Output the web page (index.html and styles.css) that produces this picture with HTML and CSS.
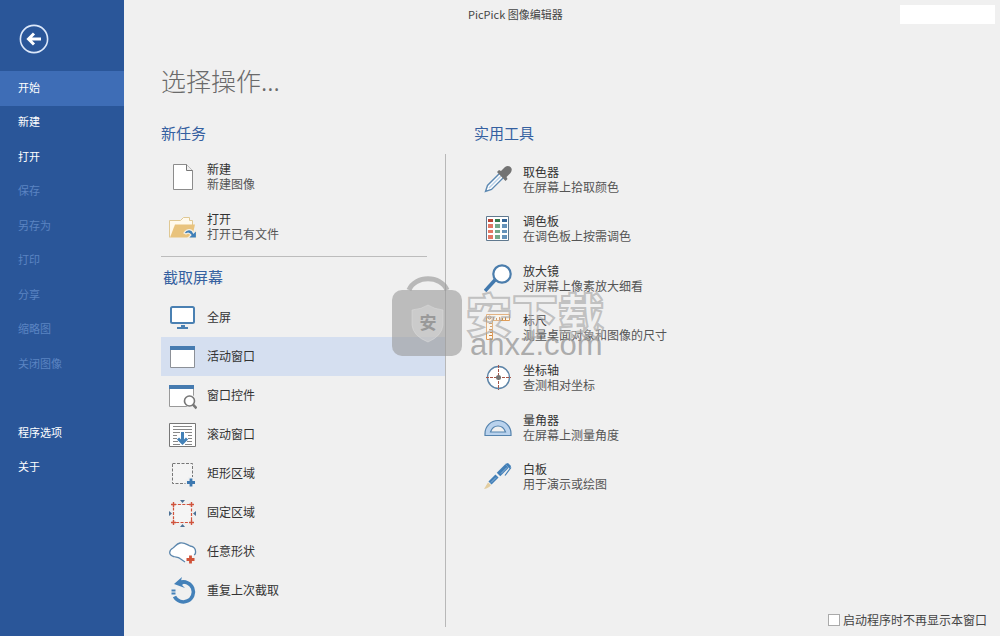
FILE: index.html
```html
<!DOCTYPE html>
<html lang="zh-CN">
<head>
<meta charset="utf-8">
<meta name="viewport" content="width=device-width, initial-scale=1">
<title>PicPick 图像编辑器</title>
<link rel="stylesheet" href="styles.css">
</head>
<body>
<div class="app">
  <aside class="sidebar">
    <button class="back" aria-label="返回">
      <svg viewBox="0 0 30 30" fill="none"><circle cx="15" cy="15" r="13.6" stroke="#dce8fa" stroke-width="1.6"/><path d="M22 15H9.500M15 9.500L9.500 15l5.500 5.500" stroke="#fff" stroke-width="3"/></svg>
    </button>
    <nav class="menu">
      <button class="menu-item active">开始</button>
      <button class="menu-item">新建</button>
      <button class="menu-item">打开</button>
      <button class="menu-item" disabled>保存</button>
      <button class="menu-item" disabled>另存为</button>
      <button class="menu-item" disabled>打印</button>
      <button class="menu-item" disabled>分享</button>
      <button class="menu-item" disabled>缩略图</button>
      <button class="menu-item" disabled>关闭图像</button>
      <span class="menu-space"></span>
      <button class="menu-item">程序选项</button>
      <button class="menu-item">关于</button>
    </nav>
  </aside>

  <main class="main">
    <header class="titlebar">
      <span class="title">PicPick 图像编辑器</span>
      <span class="blank"></span>
    </header>
    <h1 class="heading">选择操作...</h1>
    <div class="columns">
      <section class="column">
        <h2 class="section">新任务</h2>
        <div class="left-body">
          <div class="tasks">
            <button class="item">
              <svg class="icon" viewBox="0 0 28 28"><path d="M4.500 1.500h13l6 6v19h-19z" fill="#fff" stroke="#8c8c8c"/><path d="M17.500 1.500v6h6" fill="#eee" stroke="#777"/></svg>
              <span class="label"><span class="name">新建</span><span class="desc">新建图像</span></span>
            </button>
            <button class="item">
              <svg class="icon" viewBox="0 0 28 28"><path d="M.500 24.500V7.500h11l3-3h6v3h3v5" fill="#fff9ec" stroke="#dfc894"/><path d="M1 24.500L6 11.500h20l-3 13z" fill="#e9c37d"/><path d="M15 20c3-5 8-4 9.500 0l3-3v8H19l3-3q-2-3-5-1z" fill="#3f7fb8" stroke="#f6efe0" stroke-width="1.200"/></svg>
              <span class="label"><span class="name">打开</span><span class="desc">打开已有文件</span></span>
            </button>
          </div>
          <h2 class="section capture-title">截取屏幕</h2>
          <div class="captures">
            <button class="item">
              <svg class="icon" viewBox="0 0 28 28"><rect x="2" y="3" width="23" height="16" rx="1.500" fill="#fff" stroke="#4a80b2" stroke-width="2"/><path d="M12 21h4v2h3v2H8v-2h4z" fill="#4a80b2"/></svg>
              <span class="label">全屏</span>
            </button>
            <button class="item selected">
              <svg class="icon" viewBox="0 0 28 28"><path d="M1.500 3.500h24v21h-24z" fill="#fff" stroke="#8c9097"/><path d="M1 3h25v4H1z" fill="#467bb0"/></svg>
              <span class="label">活动窗口</span>
            </button>
            <button class="item">
              <svg class="icon" viewBox="0 0 28 28"><path d="M.500 3.500h24v21H.500z" fill="#fff" stroke="#999"/><path d="M0 3h25v4H0z" fill="#467bb0"/><path d="M14 20l5-7 8 1v9l-7 4z" fill="#f0f0f0"/><circle cx="20.500" cy="19" r="5" fill="#fff" stroke="#777" stroke-width="1.600"/><path d="M24 22.500l3.500 4" stroke="#777" stroke-width="2.600"/></svg>
              <span class="label">窗口控件</span>
            </button>
            <button class="item">
              <svg class="icon" viewBox="0 0 28 28"><path d="M.500 2.500h26v23H.500z" fill="#fff" stroke="#777"/><path d="M4 5.500h19M4 8.500h19M4 11.500h7M16 11.500h7M4 14.500h4M19 14.500h4M4 17.500h4M19 17.500h4M4 20.500h5M18 20.500h5M4 23.500h7M16 23.500h7" stroke="#888"/><path d="M13.500 11v11M9 17.500l4.500 4.500 4.500-4.500" fill="none" stroke="#4381b7" stroke-width="3"/></svg>
              <span class="label">滚动窗口</span>
            </button>
            <button class="item">
              <svg class="icon" viewBox="0 0 28 28"><path d="M3.500 3.500h20v20h-20z" fill="#f4f4f4" stroke="#777" stroke-dasharray="3 1.500"/><path d="M22 17v11M16.500 22.500h11" stroke="#f0f0f0" stroke-width="6"/><path d="M22 18.500v8M18 22.500h8" stroke="#3d78b0" stroke-width="2.800"/></svg>
              <span class="label">矩形区域</span>
            </button>
            <button class="item">
              <svg class="icon" viewBox="0 0 28 28"><path d="M4.500 5.500h18v18h-18z" fill="#f5f5f5" stroke="#d0533c" stroke-width="1.200" stroke-dasharray="3 1.400"/><path d="M2 5.500h5M4.500 3v5M20 5.500h5M22.500 3v5M2 23.500h5M4.500 21v5M20 23.500h5M22.500 21v5" stroke="#d0533c" stroke-width="1.400"/><path d="M11 1h5l-2.500 3zM11 28h5l-2.500-3zM0 12v5l3-2.500zM27 12v5l-3-2.500z" fill="#4c7196"/></svg>
              <span class="label">固定区域</span>
            </button>
            <button class="item">
              <svg class="icon" viewBox="0 0 28 28"><path d="M15 24.500l-4-4c-2-2-4-1-6.500-2C-1 17 0 12 4 10c3-2 3-4 7-5 5-1 7 2 10 3 4 .500 6 3 5.500 7-.500 3-2.500 2-5.500 5z" fill="#fff"/><path d="M16 24l-5-3.500c-2-2-4-1-6.500-2C-1 17 0 12 4 10c3-2 3-4 7-5 5-1 7 2 10 3 4 .500 6 3 5.500 7q-.300 1.500-1.500 2" fill="none" stroke="#5c87ad" stroke-width="1.300"/><path d="M21.500 17.500v8M17.500 21.500h8" stroke="#d05238" stroke-width="2.800"/></svg>
              <span class="label">任意形状</span>
            </button>
            <button class="item">
              <svg class="icon" viewBox="0 0 28 28" fill="none"><path d="M11 5.500a10 10 0 1 1-5.500 14" stroke="#4481b9" stroke-width="3.600"/><path d="M2.500 13.500h4M2.500 16.500h4" stroke="#4481b9" stroke-width="1.800"/><path d="M5 7l8-7-1 3.500 6 .500-5 4 3 3z" fill="#4481b9"/></svg>
              <span class="label">重复上次截取</span>
            </button>
          </div>
        </div>
      </section>

      <section class="column right">
        <h2 class="section">实用工具</h2>
        <div class="tools">
          <button class="item">
            <svg class="icon" viewBox="0 0 28 28"><path d="M1.500 26.500l2-6L16 8l4 4L7.500 24.500z" fill="#fff" stroke="#5d89b2" stroke-width="1.400"/><path d="M5 23L17 11" stroke="#b7d0e8" stroke-width="1.500"/><path d="M13 7l2-2 2 1 4-4q3-2 5.500 0t0 6l-4 4 1 2-2 2z" fill="#737373"/></svg>
            <span class="label"><span class="name">取色器</span><span class="desc">在屏幕上拾取颜色</span></span>
          </button>
          <button class="item">
            <svg class="icon" viewBox="0 0 28 28"><path d="M2.500 2.500h22v24h-22z" fill="#fff" stroke="#60798f"/><path d="M4 5h5v3H4z" fill="#b84232"/><path d="M4 10h5v4H4zM4 16h5v3H4zM4 21h5v4H4z" fill="#e27764"/><path d="M11 5h5v3h-5z" fill="#377a4e"/><path d="M11 10h5v4h-5zM11 16h5v3h-5zM11 21h5v4h-5z" fill="#73a98a"/><path d="M18 5h5v3h-5z" fill="#326395"/><path d="M18 10h5v4h-5zM18 16h5v3h-5zM18 21h5v4h-5z" fill="#6592b9"/></svg>
            <span class="label"><span class="name">调色板</span><span class="desc">在调色板上按需调色</span></span>
          </button>
          <button class="item">
            <svg class="icon" viewBox="0 0 28 28"><path d="M1 27l10-11" stroke="#4279ae" stroke-width="3.600"/><circle cx="18" cy="10" r="8.700" fill="#fff" stroke="#4b7dac" stroke-width="2.200"/></svg>
            <span class="label"><span class="name">放大镜</span><span class="desc">对屏幕上像素放大细看</span></span>
          </button>
          <button class="item">
            <svg class="icon" viewBox="0 0 28 28"><path d="M2.500 1.500h23v6h-17v19h-6z" fill="#fff8ed" stroke="#df9c57"/><path d="M9.500 7V4M12.500 7V5M15.500 7V4M18.500 7V5M21.500 7V4M8 10.500H5M8 13.500H6M8 16.500H5M8 19.500H6M8 22.500H5" stroke="#c9823f"/><circle cx="5.500" cy="4.500" r="1.500" fill="#fff" stroke="#b9865b"/></svg>
            <span class="label"><span class="name">标尺</span><span class="desc">测量桌面对象和图像的尺寸</span></span>
          </button>
          <button class="item">
            <svg class="icon" viewBox="0 0 28 28"><circle cx="14.500" cy="14.500" r="11" fill="#fff" stroke="#5e85a8" stroke-width="1.400"/><path d="M14.500 2v25M2 14.500h25" stroke="#a65547" stroke-dasharray="3 1"/><circle cx="14.500" cy="14.500" r="2.500" fill="#737373"/></svg>
            <span class="label"><span class="name">坐标轴</span><span class="desc">查测相对坐标</span></span>
          </button>
          <button class="item">
            <svg class="icon" viewBox="0 0 28 28"><path d="M1 22.500v-2a13 13 0 0 1 26 0v2zM6.500 19h15q-2-6-7.500-6t-7.500 6z" fill="#b9d2ed" fill-rule="evenodd" stroke="#5583ad" stroke-width="1.200"/></svg>
            <span class="label"><span class="name">量角器</span><span class="desc">在屏幕上测量角度</span></span>
          </button>
          <button class="item">
            <svg class="icon" viewBox="0 0 28 28" fill="none"><path d="M0 27l4-6.500 3 2.500q-2 3-7 4z" fill="#e2cda0"/><path d="M6 21l7-7" stroke="#427fb7" stroke-width="4.500"/><path d="M14.500 12.500l8.500-8.500" stroke="#427fb7" stroke-width="5"/><path d="M21 2l3-1 3 3-1 3z" fill="#427fb7"/><path d="M27 5.500l-6 8" stroke="#427fb7" stroke-width="1.200"/><path d="M17 11.500l6-6M7 20.500l5-5" stroke="#8eb4d8"/></svg>
            <span class="label"><span class="name">白板</span><span class="desc">用于演示或绘图</span></span>
          </button>
        </div>
        <label class="startup"><input class="check" type="checkbox">启动程序时不再显示本窗口</label>
      </section>
    </div>
  </main>

  <div class="watermark">
    <svg class="bag" viewBox="0 0 70 80"><path d="M17 14C23-1 49-1 55 14" fill="none" stroke="#999" stroke-opacity=".65" stroke-width="5"/><rect y="14" width="70" height="66" rx="10" fill="#999" fill-opacity=".6"/><path d="M20 34q10-1 16-5 6 4 15 5v15q-1 11-15 17-15-6-16-17z" fill="#ddd" fill-opacity=".45" stroke="#ddd" stroke-opacity=".5"/><text class="bag-text" x="36" y="53" text-anchor="middle">安</text></svg>
    <div class="mark"><span class="mark-cn">安下载</span><span class="mark-url">anxz.com</span></div>
  </div>
</div>
</body>
</html>
```

FILE: styles.css
```css
* { box-sizing: border-box; }

body {
  margin: 0;
  background: #f0f0f0;
  color: #444;
  font: 12px/15px "Noto Sans CJK SC", "Noto Sans", sans-serif;
}

button {
  margin: 0;
  padding: 0;
  border: 0;
  background: none;
  color: inherit;
  font: inherit;
  text-align: left;
}

.app {
  position: relative;
  display: flex;
  min-height: 100vh;
}

.sidebar {
  flex: 0 0 124px;
  padding-top: 24px;
  background: #2a5699;
  color: #fff;
  font-size: 11px;
}

.back {
  display: block;
  width: 30px;
  height: 30px;
  margin: 0 0 17px 19px;
}

.back svg { display: block; }

.menu {
  display: grid;
  grid-template-rows: repeat(12, 1fr);
  height: 414px;
}

.menu-item { padding: 0 0 2px 18px; }
.menu-item:disabled { color: #5b84c2; }
.menu-item.active { background: #3e6db6; }

.main {
  flex: 1;
  display: flex;
  flex-direction: column;
  padding-bottom: 9px;
}

.titlebar {
  display: flex;
  justify-content: space-between;
  padding: 5px 5px 0 344px;
}

.title {
  font-size: 11px;
  line-height: 19px;
}

.blank {
  width: 95px;
  height: 19px;
  background: #fff;
}

.heading {
  margin: 36px 0 0 37px;
  color: #6a6a6a;
  font-size: 25px;
  font-weight: 300;
  line-height: 40px;
}

.columns {
  flex: 1;
  display: flex;
  gap: 28px;
  padding: 13px 13px 0 37px;
}

.column {
  display: flex;
  flex-direction: column;
}

.column:first-child { flex: 0 0 285px; }
.right { flex: 1; }

.section {
  margin: 0;
  padding-bottom: 2px;
  color: #3560a0;
  font-size: 15px;
  font-weight: 400;
  line-height: 39px;
}

.left-body {
  flex: 1;
  border-right: 1px solid #b8b8b8;
}

.tasks {
  display: grid;
  gap: 4px;
  margin-right: 18px;
  padding-bottom: 6px;
  border-bottom: 1px solid #bcbcbc;
}

.tasks .item { height: 46px; }
.capture-title { padding-left: 2px; }

.captures {
  display: grid;
  grid-auto-rows: 39px;
}

.item {
  display: flex;
  align-items: center;
  gap: 10px;
  padding-left: 8px;
  color: #333;
}

.selected { background: #d5dff0; }

.icon {
  flex: none;
  width: 28px;
  height: 28px;
}

.label {
  display: flex;
  flex-direction: column;
  white-space: nowrap;
}

.left-body .label { padding-bottom: 2px; }

.desc { color: #555; }

.tools {
  display: grid;
  grid-template-rows: repeat(7, 1fr);
  height: 347px;
}

.tools .item {
  gap: 11px;
  padding-left: 10px;
}

.startup {
  display: flex;
  align-items: center;
  align-self: flex-end;
  gap: 3px;
  margin-top: auto;
}

.check {
  appearance: none;
  width: 12px;
  height: 12px;
  margin: 0;
  border: 1px solid #aaa;
  background: #fff;
}

.check:checked { background: #2a5699; }

.watermark {
  position: absolute;
  top: 50%;
  left: 50%;
  display: flex;
  gap: 4px;
  margin: -2px 0 0 -2px;
  transform: translate(-50%, -50%);
  pointer-events: none;
}

.bag {
  width: 70px;
  height: 80px;
}

.bag-text {
  fill: #999;
  font-size: 17px;
  font-weight: 700;
}

.mark {
  display: flex;
  flex-direction: column;
  padding-top: 14px;
}

.mark-cn {
  color: rgba(240, 240, 240, 0.3);
  font-size: 46px;
  font-weight: 900;
  line-height: 44px;
  -webkit-text-stroke: 2px rgba(165, 165, 165, 0.65);
}

.mark-url {
  padding-left: 4px;
  color: rgba(150, 150, 150, 0.75);
  font: 31px/22px "Liberation Sans", sans-serif;
}
```
